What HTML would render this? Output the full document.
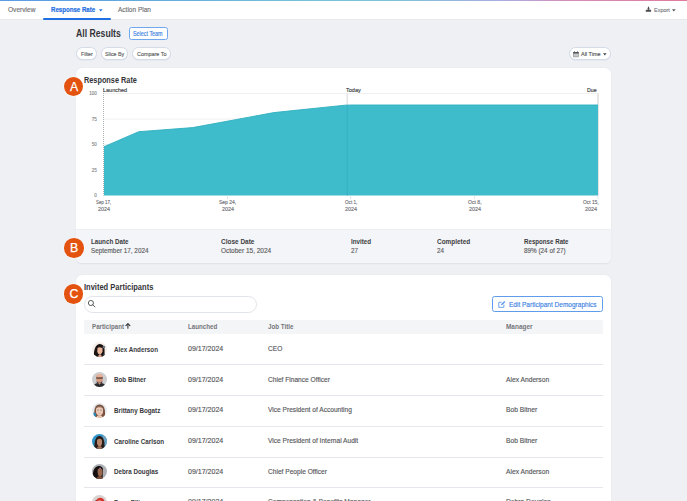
<!DOCTYPE html>
<html><head><meta charset="utf-8"><style>
html,body{margin:0;padding:0;}
body{width:687px;height:501px;overflow:hidden;position:relative;background:#eff0f4;font-family:"Liberation Sans",sans-serif;}
.t{position:absolute;white-space:nowrap;line-height:1;transform-origin:0 0;font-family:"Liberation Sans",sans-serif;-webkit-text-stroke:0.14px currentColor;}
.b{-webkit-text-stroke:0;}
.badge{position:absolute;width:19.6px;height:19.6px;border-radius:50%;background:#e3520f;box-shadow:0 0 0 0.6px rgba(255,255,255,0.7);}
.badge span{position:absolute;left:0;width:100%;text-align:center;top:3.9px;color:#fff;font:12.3px/1 "Liberation Sans",sans-serif;-webkit-text-stroke:0.25px #fff;}
.av{position:absolute;}
</style></head><body>
<div style="position:absolute;left:0;top:0;width:687px;height:19px;background:#fff;"></div>
<div style="position:absolute;left:0;top:19px;width:687px;height:1px;background:#e7e9ed;"></div>
<div style="position:absolute;left:0;top:0;width:687px;height:1px;background:linear-gradient(90deg,#5a9ae6 0%,#62acde 22%,#72c0d8 42%,#7cc4d8 57%,#a9ade2 73%,#d48cb8 83%,#e27a9c 100%);"></div>
<div class="t" style="left:7.80px;top:6px;font-size:7.0px;color:#6f6f73;transform:scaleX(0.9387);">Overview</div>
<div class="t b" style="left:50.80px;top:6px;font-size:7.0px;color:#1f6fe0;font-weight:bold;transform:scaleX(0.8739);-webkit-text-stroke:0.2px #1f6fe0;">Response Rate</div>
<svg style="position:absolute;left:99px;top:9px" width="4" height="3"><path d="M0 0.2H3.6L1.8 2.4Z" fill="#1f6fe0"/></svg>
<div style="position:absolute;left:42.6px;top:17.9px;width:68.2px;height:2px;background:#1f6fe0;border-radius:1px;"></div>
<div class="t" style="left:118.00px;top:6px;font-size:7.0px;color:#6f6f73;transform:scaleX(0.9319);">Action Plan</div>
<svg style="position:absolute;left:645px;top:6px" width="7" height="7" viewBox="0 0 7 7"><path d="M2.9 0.7H4.1V2.6H5.0L3.5 4.2L2.0 2.6H2.9Z" fill="#4a4b50"/><rect x="0.8" y="3.8" width="5.3" height="1.9" rx="0.3" fill="#4a4b50"/></svg>
<div class="t" style="left:654.10px;top:8px;font-size:5.94px;color:#7a7a7e;transform:scaleX(0.9262);">Export</div>
<svg style="position:absolute;left:671.5px;top:9px" width="4" height="3"><path d="M0 0.2H3.6L1.8 2.4Z" fill="#555"/></svg>
<div class="t b" style="left:76.40px;top:29px;font-size:10.25px;color:#333438;font-weight:bold;transform:scaleX(0.8457);">All Results</div>
<div style="position:absolute;left:129px;top:27.1px;width:38.6px;height:12.9px;box-sizing:border-box;border:1px solid #6fa6ee;border-radius:2.5px;background:#fff;"></div>
<div class="t" style="left:133.40px;top:31px;font-size:6.36px;color:#3a7fe2;transform:scaleX(0.8487);">Select Team</div>
<div style="position:absolute;left:76.2px;top:47.3px;width:20.700000000000003px;height:13.0px;box-sizing:border-box;border:1px solid #d3dbe6;border-radius:7px;background:#fff;box-shadow:0 0.6px 0 #dde3ec;"></div>
<div class="t" style="left:80.70px;top:52px;font-size:5.72px;color:#5b5c60;transform:scaleX(0.9284);">Filter</div>
<div style="position:absolute;left:100.8px;top:47.3px;width:27.10000000000001px;height:13.0px;box-sizing:border-box;border:1px solid #d3dbe6;border-radius:7px;background:#fff;box-shadow:0 0.6px 0 #dde3ec;"></div>
<div class="t" style="left:105.00px;top:52px;font-size:5.72px;color:#5b5c60;transform:scaleX(0.9293);">Slice By</div>
<div style="position:absolute;left:132px;top:47.3px;width:38.599999999999994px;height:13.0px;box-sizing:border-box;border:1px solid #d3dbe6;border-radius:7px;background:#fff;box-shadow:0 0.6px 0 #dde3ec;"></div>
<div class="t" style="left:136.60px;top:52px;font-size:5.72px;color:#5b5c60;transform:scaleX(0.9467);">Compare To</div>
<div style="position:absolute;left:569px;top:47.2px;width:41.7px;height:13.1px;box-sizing:border-box;border:1px solid #d3dbe6;border-radius:7px;background:#fff;box-shadow:0 0.6px 0 #dde3ec;"></div>
<svg style="position:absolute;left:573px;top:51px" width="6" height="6.5" viewBox="0 0 6 6.5"><rect x="0.1" y="1" width="5.7" height="5.3" rx="0.7" fill="#8c8d92"/><rect x="0.1" y="1" width="5.7" height="1.6" rx="0.5" fill="#55565b"/><rect x="0.7" y="2.7" width="4.5" height="3" fill="#c6c7cb"/><rect x="1.1" y="0.3" width="0.9" height="1.5" rx="0.3" fill="#55565b"/><rect x="3.9" y="0.3" width="0.9" height="1.5" rx="0.3" fill="#55565b"/></svg>
<div class="t" style="left:581.40px;top:52px;font-size:5.83px;color:#4e4f53;transform:scaleX(0.9406);">All Time</div>
<svg style="position:absolute;left:602.6px;top:52.5px" width="4" height="3"><path d="M0 0.2H3.6L1.8 2.4Z" fill="#444"/></svg>
<div style="position:absolute;left:76.2px;top:67.5px;width:534.5px;height:195.5px;background:#fff;border-radius:6px;box-shadow:0 0.5px 1.5px rgba(30,40,60,0.08);"></div>
<div style="position:absolute;left:76.2px;top:228.6px;width:534.5px;height:34.4px;background:#f4f5f8;border-radius:0 0 6px 6px;border-top:0.6px solid #eceef2;box-sizing:border-box;"></div>
<div class="t b" style="left:84.10px;top:76px;font-size:8.44px;color:#333438;font-weight:bold;transform:scaleX(0.8692);">Response Rate</div>
<svg style="position:absolute;left:0;top:0" width="687" height="501"><line x1="104" x2="598" y1="93.50" y2="93.50" stroke="#ececee" stroke-width="0.8"/><line x1="104" x2="598" y1="119.00" y2="119.00" stroke="#ececee" stroke-width="0.8"/><line x1="104" x2="598" y1="144.50" y2="144.50" stroke="#ececee" stroke-width="0.8"/><line x1="104" x2="598" y1="170.00" y2="170.00" stroke="#ececee" stroke-width="0.8"/><line x1="598" x2="598" y1="93.5" y2="195.5" stroke="#cdced2" stroke-width="1"/><line x1="103.5" x2="103.5" y1="89" y2="195.5" stroke="#8e8f94" stroke-width="0.7" stroke-dasharray="1 1"/><path d="M104 195.5 L104 146.7 L138.7 131.7 L192.7 127.6 L273.8 112.6 L345 105.2 Q349 105 353 105 L598 105 L598 195.5 Z" fill="#3fbccc"/><path d="M104 146.7 L138.7 131.7 L192.7 127.6 L273.8 112.6 L345 105.2 Q349 105 353 105 L598 105" fill="none" stroke="#30afbf" stroke-width="0.9"/><line x1="347.2" x2="347.2" y1="93.5" y2="104.6" stroke="#dcdde0" stroke-width="1.2"/><line x1="347.2" x2="347.2" y1="104.6" y2="195.5" stroke="#38afbf" stroke-width="1"/><line x1="227.5" x2="227.5" y1="195.5" y2="199.0" stroke="#d5d8de" stroke-width="0.7"/><line x1="350.6" x2="350.6" y1="195.5" y2="199.0" stroke="#d5d8de" stroke-width="0.7"/><line x1="474.6" x2="474.6" y1="195.5" y2="199.0" stroke="#d5d8de" stroke-width="0.7"/><line x1="598" x2="598" y1="195.5" y2="199.0" stroke="#d5d8de" stroke-width="0.7"/></svg>
<div class="t" style="left:89.13px;top:92px;font-size:4.6px;color:#8a8b90;">100</div>
<div class="t" style="left:91.68px;top:118px;font-size:4.6px;color:#8a8b90;">75</div>
<div class="t" style="left:91.68px;top:143px;font-size:4.6px;color:#8a8b90;">50</div>
<div class="t" style="left:91.68px;top:169px;font-size:4.6px;color:#8a8b90;">25</div>
<div class="t" style="left:94.24px;top:194px;font-size:4.6px;color:#8a8b90;">0</div>
<div class="t" style="left:102.50px;top:88px;font-size:5.41px;color:#3d3e42;transform:scaleX(1.0183);">Launched</div>
<div class="t" style="left:346.20px;top:88px;font-size:5.41px;color:#3d3e42;transform:scaleX(1.0184);">Today</div>
<div class="t" style="left:587.00px;top:88px;font-size:5.41px;color:#3d3e42;transform:scaleX(0.9877);">Due</div>
<div class="t" style="left:95.95px;top:200px;font-size:5.09px;color:#707176;transform:scaleX(0.8606);">Sep 17,</div>
<div class="t" style="left:97.50px;top:207px;font-size:5.09px;color:#707176;transform:scaleX(1.0596);">2024</div>
<div class="t" style="left:218.85px;top:200px;font-size:5.09px;color:#707176;transform:scaleX(0.9860);">Sep 24,</div>
<div class="t" style="left:221.50px;top:207px;font-size:5.09px;color:#707176;transform:scaleX(1.0596);">2024</div>
<div class="t" style="left:344.85px;top:200px;font-size:5.09px;color:#707176;transform:scaleX(0.9061);">Oct 1,</div>
<div class="t" style="left:345.00px;top:207px;font-size:5.09px;color:#707176;transform:scaleX(1.0596);">2024</div>
<div class="t" style="left:468.20px;top:200px;font-size:5.09px;color:#707176;transform:scaleX(1.0018);">Oct 8,</div>
<div class="t" style="left:469.00px;top:207px;font-size:5.09px;color:#707176;transform:scaleX(1.0596);">2024</div>
<div class="t" style="left:582.75px;top:200px;font-size:5.09px;color:#707176;transform:scaleX(0.9567);">Oct 15,</div>
<div class="t" style="left:584.60px;top:207px;font-size:5.09px;color:#707176;transform:scaleX(1.0596);">2024</div>
<div class="t b" style="left:91.20px;top:239px;font-size:6.57px;color:#3b3c40;font-weight:bold;transform:scaleX(0.9511);">Launch Date</div>
<div class="t" style="left:91.20px;top:248px;font-size:6.78px;color:#5b5c60;transform:scaleX(0.9375);">September 17, 2024</div>
<div class="t b" style="left:220.80px;top:239px;font-size:6.57px;color:#3b3c40;font-weight:bold;transform:scaleX(0.9866);">Close Date</div>
<div class="t" style="left:220.80px;top:248px;font-size:6.78px;color:#5b5c60;transform:scaleX(0.9600);">October 15, 2024</div>
<div class="t b" style="left:350.90px;top:239px;font-size:6.57px;color:#3b3c40;font-weight:bold;transform:scaleX(0.9492);">Invited</div>
<div class="t" style="left:350.90px;top:248px;font-size:6.78px;color:#5b5c60;transform:scaleX(0.9285);">27</div>
<div class="t b" style="left:436.90px;top:239px;font-size:6.57px;color:#3b3c40;font-weight:bold;transform:scaleX(0.9780);">Completed</div>
<div class="t" style="left:436.90px;top:248px;font-size:6.78px;color:#5b5c60;transform:scaleX(0.9285);">24</div>
<div class="t b" style="left:523.90px;top:239px;font-size:6.57px;color:#3b3c40;font-weight:bold;transform:scaleX(0.9396);">Response Rate</div>
<div class="t" style="left:523.90px;top:248px;font-size:6.78px;color:#5b5c60;transform:scaleX(0.9376);">89% (24 of 27)</div>
<div style="position:absolute;left:76.2px;top:275px;width:534.5px;height:240px;background:#fff;border-radius:6px;box-shadow:0 0.5px 1.5px rgba(30,40,60,0.08);"></div>
<div class="t b" style="left:83.80px;top:283px;font-size:8.48px;color:#333438;font-weight:bold;transform:scaleX(0.8872);">Invited Participants</div>
<div style="position:absolute;left:83.8px;top:295.8px;width:173px;height:16.9px;box-sizing:border-box;border:0.9px solid #e1e4ea;border-radius:8.5px;background:#fff;"></div>
<svg style="position:absolute;left:87px;top:299px" width="9" height="9" viewBox="0 0 9 9"><circle cx="3.9" cy="4.0" r="2.55" fill="none" stroke="#55565a" stroke-width="0.95"/><line x1="5.8" y1="5.9" x2="8.0" y2="7.9" stroke="#55565a" stroke-width="0.95" stroke-linecap="round"/></svg>
<div style="position:absolute;left:492.2px;top:296.2px;width:111.1px;height:16.3px;box-sizing:border-box;border:0.9px solid #5f9ceb;border-radius:2.5px;background:#fff;"></div>
<svg style="position:absolute;left:498px;top:300px" width="9" height="9" viewBox="0 0 9 9"><path d="M3.6 2.3H0.8V7.3H5.9V4.6" fill="none" stroke="#5593ea" stroke-width="0.85"/><path d="M2.9 5.3L3.3 4.1L6.4 1.0L7.3 1.9L4.2 5.0Z" fill="#5593ea"/></svg>
<div class="t" style="left:509.10px;top:302px;font-size:6.68px;color:#3a7fe2;transform:scaleX(0.9760);">Edit Participant Demographics</div>
<div style="position:absolute;left:84px;top:320px;width:519.3px;height:13.6px;background:#f4f5f7;"></div>
<div class="t b" style="left:91.60px;top:324px;font-size:6.47px;color:#74757b;font-weight:bold;transform:scaleX(0.9600);">Participant</div>
<svg style="position:absolute;left:125.1px;top:323.1px" width="6" height="6" viewBox="0 0 6 6"><path d="M0.9 2.7L2.9 0.7L4.9 2.7" fill="none" stroke="#2e2f33" stroke-width="1.05" stroke-linecap="round" stroke-linejoin="round"/><line x1="2.9" y1="1" x2="2.9" y2="5.2" stroke="#2e2f33" stroke-width="1.05" stroke-linecap="round"/></svg>
<div class="t b" style="left:187.50px;top:324px;font-size:6.47px;color:#74757b;font-weight:bold;transform:scaleX(0.9556);">Launched</div>
<div class="t b" style="left:267.60px;top:324px;font-size:6.47px;color:#74757b;font-weight:bold;transform:scaleX(0.9629);">Job Title</div>
<div class="t b" style="left:505.50px;top:324px;font-size:6.47px;color:#74757b;font-weight:bold;transform:scaleX(0.9961);">Manager</div>
<svg class="av" style="left:92px;top:341.50px;" width="15" height="15" viewBox="0 0 30 30"><defs><clipPath id="c0"><circle cx="15" cy="15" r="15"/></clipPath></defs><g clip-path="url(#c0)"><rect width="30" height="30" fill="#f6efea"/><path d="M4 30 C3 18 6 5 15 4 C24 4 26 12 25 20 C25 25 26 28 27 30Z" fill="#1a1412"/><path d="M11 12 C13 8 19 8 21 12 L21 19 C20 23 17 25 15.5 25 C13 25 11 22 10.5 19Z" fill="#eab59a"/><path d="M10 9 C13 6 18 6 21 9 L20 12 C17 10 13 10 11 12Z" fill="#1a1412"/><path d="M12 30 C13 26 14 25 16 25 C18 25 19 26 20 30Z" fill="#d8a48c"/><path d="M20 30 L23 23 L27 30Z" fill="#3a3c46"/><circle cx="24" cy="10" r="2.5" fill="#6b7888"/></g></svg>
<div class="t b" style="left:114.20px;top:347px;font-size:6.65px;color:#37383c;font-weight:bold;transform:scaleX(0.9430);">Alex Anderson</div>
<div class="t" style="left:187.50px;top:345px;font-size:7.31px;color:#55565a;transform:scaleX(0.9648);">09/17/2024</div>
<div class="t" style="left:267.60px;top:345px;font-size:7.0px;color:#55565a;transform:scaleX(0.9430);">CEO</div>
<div style="position:absolute;left:84.4px;top:364.4px;width:518.9px;height:0.8px;background:#e6e7ec;"></div>
<svg class="av" style="left:92px;top:372.20px;" width="15" height="15" viewBox="0 0 30 30"><defs><clipPath id="c1"><circle cx="15" cy="15" r="15"/></clipPath></defs><g clip-path="url(#c1)"><rect width="30" height="30" fill="#cdced2"/><ellipse cx="15" cy="12.5" rx="6.8" ry="8.5" fill="#d89a7c"/><ellipse cx="15" cy="7" rx="5" ry="3" fill="#e9b49a"/><rect x="8.5" y="11" width="13" height="2.2" fill="#3a3030"/><path d="M9.5 17 C11 23 19 23 20.5 17 L20.5 21 C18 25 12 25 9.5 21Z" fill="#4a3028"/><path d="M2 30 C4 23 9 22 15 22 C21 22 26 23 28 30Z" fill="#2a2b30"/><path d="M12 22 L15 25.5 L18 22Z" fill="#c98d70"/></g></svg>
<div class="t b" style="left:114.20px;top:377px;font-size:6.65px;color:#37383c;font-weight:bold;transform:scaleX(0.9430);">Bob Bitner</div>
<div class="t" style="left:187.50px;top:376px;font-size:7.31px;color:#55565a;transform:scaleX(0.9648);">09/17/2024</div>
<div class="t" style="left:267.60px;top:376px;font-size:7.0px;color:#55565a;transform:scaleX(0.9430);">Chief Finance Officer</div>
<div class="t" style="left:505.50px;top:377px;font-size:7.1px;color:#55565a;transform:scaleX(0.9430);">Alex Anderson</div>
<div style="position:absolute;left:84.4px;top:395.09999999999997px;width:518.9px;height:0.8px;background:#e6e7ec;"></div>
<svg class="av" style="left:92px;top:402.90px;" width="15" height="15" viewBox="0 0 30 30"><defs><clipPath id="c2"><circle cx="15" cy="15" r="15"/></clipPath></defs><g clip-path="url(#c2)"><rect width="30" height="30" fill="#e9ecef"/><path d="M5 26 C3 12 7 3 15 3 C23 3 27 11 26 24 L23 28 L7 28Z" fill="#7a5440"/><ellipse cx="15" cy="15.5" rx="7.2" ry="9" fill="#eccab6"/><path d="M8 10 C10 5 20 5 22 10 C19 8 11 8 8 10Z" fill="#7a5440"/><circle cx="12" cy="14" r="1.1" fill="#4a5868"/><circle cx="18" cy="14" r="1.1" fill="#4a5868"/><path d="M13 20 C14 21 16 21 17 20" stroke="#d08a80" stroke-width="1" fill="none"/><path d="M2 30 L3 19 L8 21 L8 30Z" fill="#2a86b4"/><path d="M8 30 C9 26 12 24 15 24 C18 24 21 26 22 30Z" fill="#e7c2ac"/></g></svg>
<div class="t b" style="left:114.20px;top:408px;font-size:6.65px;color:#37383c;font-weight:bold;transform:scaleX(0.9430);">Brittany Bogatz</div>
<div class="t" style="left:187.50px;top:406px;font-size:7.31px;color:#55565a;transform:scaleX(0.9648);">09/17/2024</div>
<div class="t" style="left:267.60px;top:406px;font-size:7.0px;color:#55565a;transform:scaleX(0.9430);">Vice President of Accounting</div>
<div class="t" style="left:505.50px;top:407px;font-size:7.1px;color:#55565a;transform:scaleX(0.9430);">Bob Bitner</div>
<div style="position:absolute;left:84.4px;top:425.79999999999995px;width:518.9px;height:0.8px;background:#e6e7ec;"></div>
<svg class="av" style="left:92px;top:433.60px;" width="15" height="15" viewBox="0 0 30 30"><defs><clipPath id="c3"><circle cx="15" cy="15" r="15"/></clipPath></defs><g clip-path="url(#c3)"><rect width="30" height="30" fill="#2f95c8"/><path d="M22 30 L21 0 L30 0 L30 30Z" fill="#6fa3c2"/><path d="M5 30 C4 16 7 4 15 4 C23 4 26 14 25 30Z" fill="#2a1c16"/><path d="M10 13 C11 8 19 8 20 13 L20 19 C19 23 17 25 15 25 C13 25 11 23 10 19Z" fill="#b8866a"/><path d="M9 30 C10 26 13 24 15 24 C18 24 20 26 21 30Z" fill="#a37158"/></g></svg>
<div class="t b" style="left:114.20px;top:439px;font-size:6.65px;color:#37383c;font-weight:bold;transform:scaleX(0.9430);">Caroline Carlson</div>
<div class="t" style="left:187.50px;top:437px;font-size:7.31px;color:#55565a;transform:scaleX(0.9648);">09/17/2024</div>
<div class="t" style="left:267.60px;top:437px;font-size:7.0px;color:#55565a;transform:scaleX(0.9430);">Vice President of Internal Audit</div>
<div class="t" style="left:505.50px;top:438px;font-size:7.1px;color:#55565a;transform:scaleX(0.9430);">Bob Bitner</div>
<div style="position:absolute;left:84.4px;top:456.5px;width:518.9px;height:0.8px;background:#e6e7ec;"></div>
<svg class="av" style="left:92px;top:464.30px;" width="15" height="15" viewBox="0 0 30 30"><defs><clipPath id="c4"><circle cx="15" cy="15" r="15"/></clipPath></defs><g clip-path="url(#c4)"><rect width="30" height="30" fill="#adb0b5"/><path d="M1 30 C1 14 5 4 14 4 C20 4 23 9 22 14 L21 30Z" fill="#15100e"/><path d="M11 12 C12 8 20 8 21 12 L21 19 C20 23 18 25 16 25 C14 25 12 23 11.5 19Z" fill="#9a684e"/><path d="M8 30 C10 26 13 24 16 24 C19 24 21 26 22 30Z" fill="#7e523c"/><circle cx="16" cy="8.5" r="1.3" fill="#c7a4e6"/></g></svg>
<div class="t b" style="left:114.20px;top:469px;font-size:6.65px;color:#37383c;font-weight:bold;transform:scaleX(0.9430);">Debra Douglas</div>
<div class="t" style="left:187.50px;top:468px;font-size:7.31px;color:#55565a;transform:scaleX(0.9648);">09/17/2024</div>
<div class="t" style="left:267.60px;top:468px;font-size:7.0px;color:#55565a;transform:scaleX(0.9430);">Chief People Officer</div>
<div class="t" style="left:505.50px;top:469px;font-size:7.1px;color:#55565a;transform:scaleX(0.9430);">Alex Anderson</div>
<div style="position:absolute;left:84.4px;top:487.2px;width:518.9px;height:0.8px;background:#e6e7ec;"></div>
<svg class="av" style="left:92px;top:495.00px;" width="15" height="15" viewBox="0 0 30 30"><defs><clipPath id="c5"><circle cx="15" cy="15" r="15"/></clipPath></defs><g clip-path="url(#c5)"><rect width="30" height="30" fill="#d8d2d0"/><path d="M4 16 C6 6 24 6 26 16 L26 30 L4 30Z" fill="#4a2a26"/><path d="M8 12 C12 3 22 4 25 12 L20 14 Z" fill="#d5332b"/><ellipse cx="15" cy="17" rx="5" ry="6.5" fill="#d9a88c"/></g></svg>
<div class="t b" style="left:114.20px;top:500px;font-size:6.65px;color:#37383c;font-weight:bold;transform:scaleX(0.9430);">Evan Ellis</div>
<div class="t" style="left:187.50px;top:498px;font-size:7.31px;color:#55565a;transform:scaleX(0.9648);">09/17/2024</div>
<div class="t" style="left:267.60px;top:498px;font-size:7.0px;color:#55565a;transform:scaleX(0.9430);">Compensation &amp; Benefits Manager</div>
<div class="t" style="left:505.50px;top:499px;font-size:7.1px;color:#55565a;transform:scaleX(0.9430);">Debra Douglas</div>
<div class="badge" style="left:63.90px;top:76.90px;"><span style="left:0.4px">A</span></div>
<div class="badge" style="left:64.00px;top:238.20px;"><span style="left:0.4px">B</span></div>
<div class="badge" style="left:63.80px;top:284.20px;"><span style="left:0.4px">C</span></div>
</body></html>
